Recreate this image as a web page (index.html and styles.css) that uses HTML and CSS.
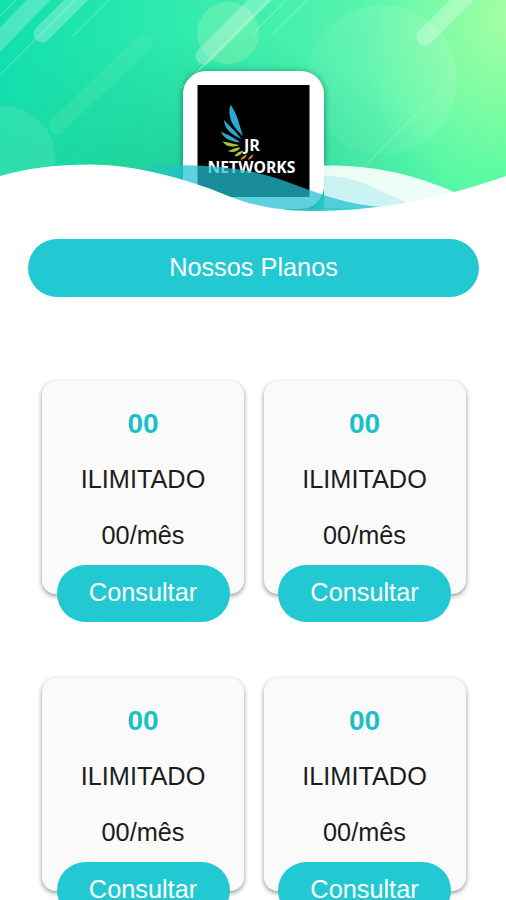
FILE: index.html
```
<!DOCTYPE html>
<html lang="pt-BR">
<head>
<meta charset="utf-8">
<meta name="viewport" content="width=device-width, initial-scale=1">
<title>JR Networks</title>
<link rel="stylesheet" href="styles.css">
</head>
<body>
<header class="hero">
  <svg class="hero-layer" viewBox="0 0 506 220" aria-hidden="true">
    <defs>
      <linearGradient id="disc" x1="1" y1=".2" x2="0" y2=".7">
        <stop offset="0" stop-color="#fff" stop-opacity=".12"/>
        <stop offset="1" stop-color="#fff" stop-opacity=".03"/>
      </linearGradient>
      <linearGradient id="fade" gradientUnits="userSpaceOnUse" x1="57" y1="126" x2="144" y2="42">
        <stop offset="0" stop-color="#9ff5b8" stop-opacity=".13"/>
        <stop offset="1" stop-color="#9ff5b8" stop-opacity=".1"/>
      </linearGradient>
    </defs>
    <circle cx="4" cy="157" r="51" fill="#bff5d0" opacity=".14"/>
    <circle cx="228" cy="33" r="31" fill="#e4ffb8" opacity=".2"/>
    <circle cx="382" cy="80" r="75" fill="url(#disc)"/>
    <g fill="none" stroke-linecap="round">
      <path d="M-10 50 50-12" stroke="#fff" stroke-opacity=".24" stroke-width="17"/>
      <path d="M42 34 88-12" stroke="#fff" stroke-opacity=".26" stroke-width="17"/>
      <path d="M57 126 144 42" stroke="url(#fade)" stroke-width="17"/>
      <path d="M204 56 270-10" stroke="#fff" stroke-opacity=".26" stroke-width="17"/>
      <path d="M425 37 477-15" stroke="#fff" stroke-opacity=".28" stroke-width="17"/>
    </g>
    <g fill="none" stroke="#dffff0" stroke-opacity=".5" stroke-width=".8">
      <path d="M0 16 17-1M0 75 76-1M73 36 109 0M253 34 286 0M271 35 307 0"/>
      <path d="M364 167 455 74" stroke-opacity=".38"/>
      <path d="M181 88 269 0" stroke="#ffe6df" stroke-opacity=".85"/>
    </g>
  </svg>
  <div class="logo-card">
    <svg class="logo" viewBox="0 0 112 112" role="img" aria-label="JR Networks">
      <rect width="112" height="112" fill="#000"/>
      <g fill="#2aa9d0">
        <path d="M33 19.500C29 32 36 43 45.500 51 42 41 40 29 33 19.500Z"/>
        <path d="M26.500 35C27 45 35 50 44 54 38 46 32 41 26.500 35Z"/>
        <path d="M23.500 46.500C26 54 34 56.500 43 57.500 36 52 30 50 23.500 46.500Z"/>
      </g>
      <g fill="#abc43b">
        <path d="M25 56.500C29 62.500 36 62.500 42 60 36 59 31 57.500 25 56.500Z"/>
        <path d="M30.500 66C35 68.500 41 66 43 62.500 37 62.500 34 65 30.500 66Z"/>
        <path d="M37 71C41 72 44 69 46 65.500 42 66 39 68 37 71Z"/>
      </g>
      <path d="M43 74.500C47 74.500 48 72 49.500 69.500 46 70.500 45 72 43 74.500ZM50.500 74.500C53.500 74.500 55 72 56 69.500 53 70.500 52 72 50.500 74.500Z" fill="#e9942c"/>
      <text x="46.500" y="65.500" textLength="16" lengthAdjust="spacingAndGlyphs" class="logo-text">JR</text>
      <text x="10" y="88" textLength="88" lengthAdjust="spacingAndGlyphs" class="logo-text">NETWORKS</text>
    </svg>
  </div>
  <svg class="hero-layer" viewBox="0 0 506 220" aria-hidden="true">
    <defs>
      <linearGradient id="teal" gradientUnits="userSpaceOnUse" x1="130" y1="0" x2="180" y2="0">
        <stop offset="0" stop-color="#22c0d3" stop-opacity=".1"/>
        <stop offset="1" stop-color="#22c0d3" stop-opacity=".73"/>
      </linearGradient>
    </defs>
    <path d="M324 165.500C375 165 415 175 454 192L440 208H324Z" fill="#fff" opacity=".9"/>
    <path d="M324 176C358 176 371 188 406 202L390 212H324Z" fill="#a9e9ef" opacity=".5"/>
    <path d="M125 167C165 164.500 207 164 236 169C294 177 315 200 380 207L320 216 200 200Z" fill="url(#teal)"/>
    <path d="M0 176C29 168 57 164.500 90 164.500C132 165 171 175 211 189C238 200 262 211 315 211C383 211 449 196 506 176V221H0Z" fill="#fff"/>
  </svg>
</header>
<main class="content">
  <h1 class="title">Nossos Planos</h1>
  <section class="plans">
    <article class="plan"><h2 class="speed">00</h2><p class="line">ILIMITADO</p><p class="line">00/mês</p><a class="button">Consultar</a></article>
    <article class="plan"><h2 class="speed">00</h2><p class="line">ILIMITADO</p><p class="line">00/mês</p><a class="button">Consultar</a></article>
    <article class="plan"><h2 class="speed">00</h2><p class="line">ILIMITADO</p><p class="line">00/mês</p><a class="button">Consultar</a></article>
    <article class="plan"><h2 class="speed">00</h2><p class="line">ILIMITADO</p><p class="line">00/mês</p><a class="button">Consultar</a></article>
  </section>
</main>
</body>
</html>
```
FILE: styles.css
```
* { box-sizing: border-box; }
body {
  margin: 0;
  height: 900px;
  overflow: hidden;
  background: #fff;
  color: #1c1c1c;
  font-family: "Liberation Sans", Arial, sans-serif;
  font-size: 25.3px;
}
.hero {
  position: relative;
  height: 220px;
  padding-top: 71px;
  background:
    radial-gradient(ellipse 150px 190px at 506px 20px, rgba(174, 255, 165, .9), rgba(150, 255, 165, 0)),
    radial-gradient(ellipse 260px 165px at 190px 195px, rgba(24, 200, 145, .8), rgba(24, 200, 145, 0)),
    linear-gradient(90deg, #12dfae 0%, #35ecae 40%, #56f3ad 70%, #4dfba0 100%);
}
.hero-layer {
  position: absolute;
  top: 0;
  left: 0;
  width: 506px;
  height: 220px;
}
.logo-card {
  position: relative;
  width: 141px;
  height: 138px;
  margin: 0 auto;
  padding: 14px;
  border-radius: 23px;
  background: #fff;
  box-shadow: 0 1px 6px rgba(0, 70, 45, .6);
}
.logo { display: block; width: 113px; height: 112px; }
.logo-text {
  fill: #fff;
  font-family: "Open Sans", sans-serif;
  font-size: 16.3px;
  font-weight: 700;
}
.content { padding: 19px 27px 0 28px; }
.title {
  margin: 0;
  height: 58px;
  border-radius: 29px;
  background: #22c9d2;
  color: #fff;
  font-size: 25.3px;
  font-weight: 400;
  line-height: 57px;
  text-align: center;
}
.plans {
  display: grid;
  grid-template-columns: 202px 202px;
  column-gap: 19.5px;
  row-gap: 84px;
  padding: 84px 0 0 14px;
}
.plan {
  display: flex;
  flex-direction: column;
  align-items: center;
  height: 213px;
  padding-top: 15px;
  border-radius: 14px;
  background: #fafafa;
  box-shadow: 0 2px 5px rgba(0, 0, 0, .42);
}
.speed, .line {
  flex: none;
  height: 56px;
  margin: 0;
  line-height: 55px;
}
.speed { color: #1bbfc8; font-size: 28px; line-height: 56px; }
.button {
  flex: none;
  width: 173px;
  height: 57px;
  margin-top: .5px;
  border-radius: 29px;
  background: #22c9d2;
  color: #fff;
  line-height: 54px;
  text-align: center;
}
```
